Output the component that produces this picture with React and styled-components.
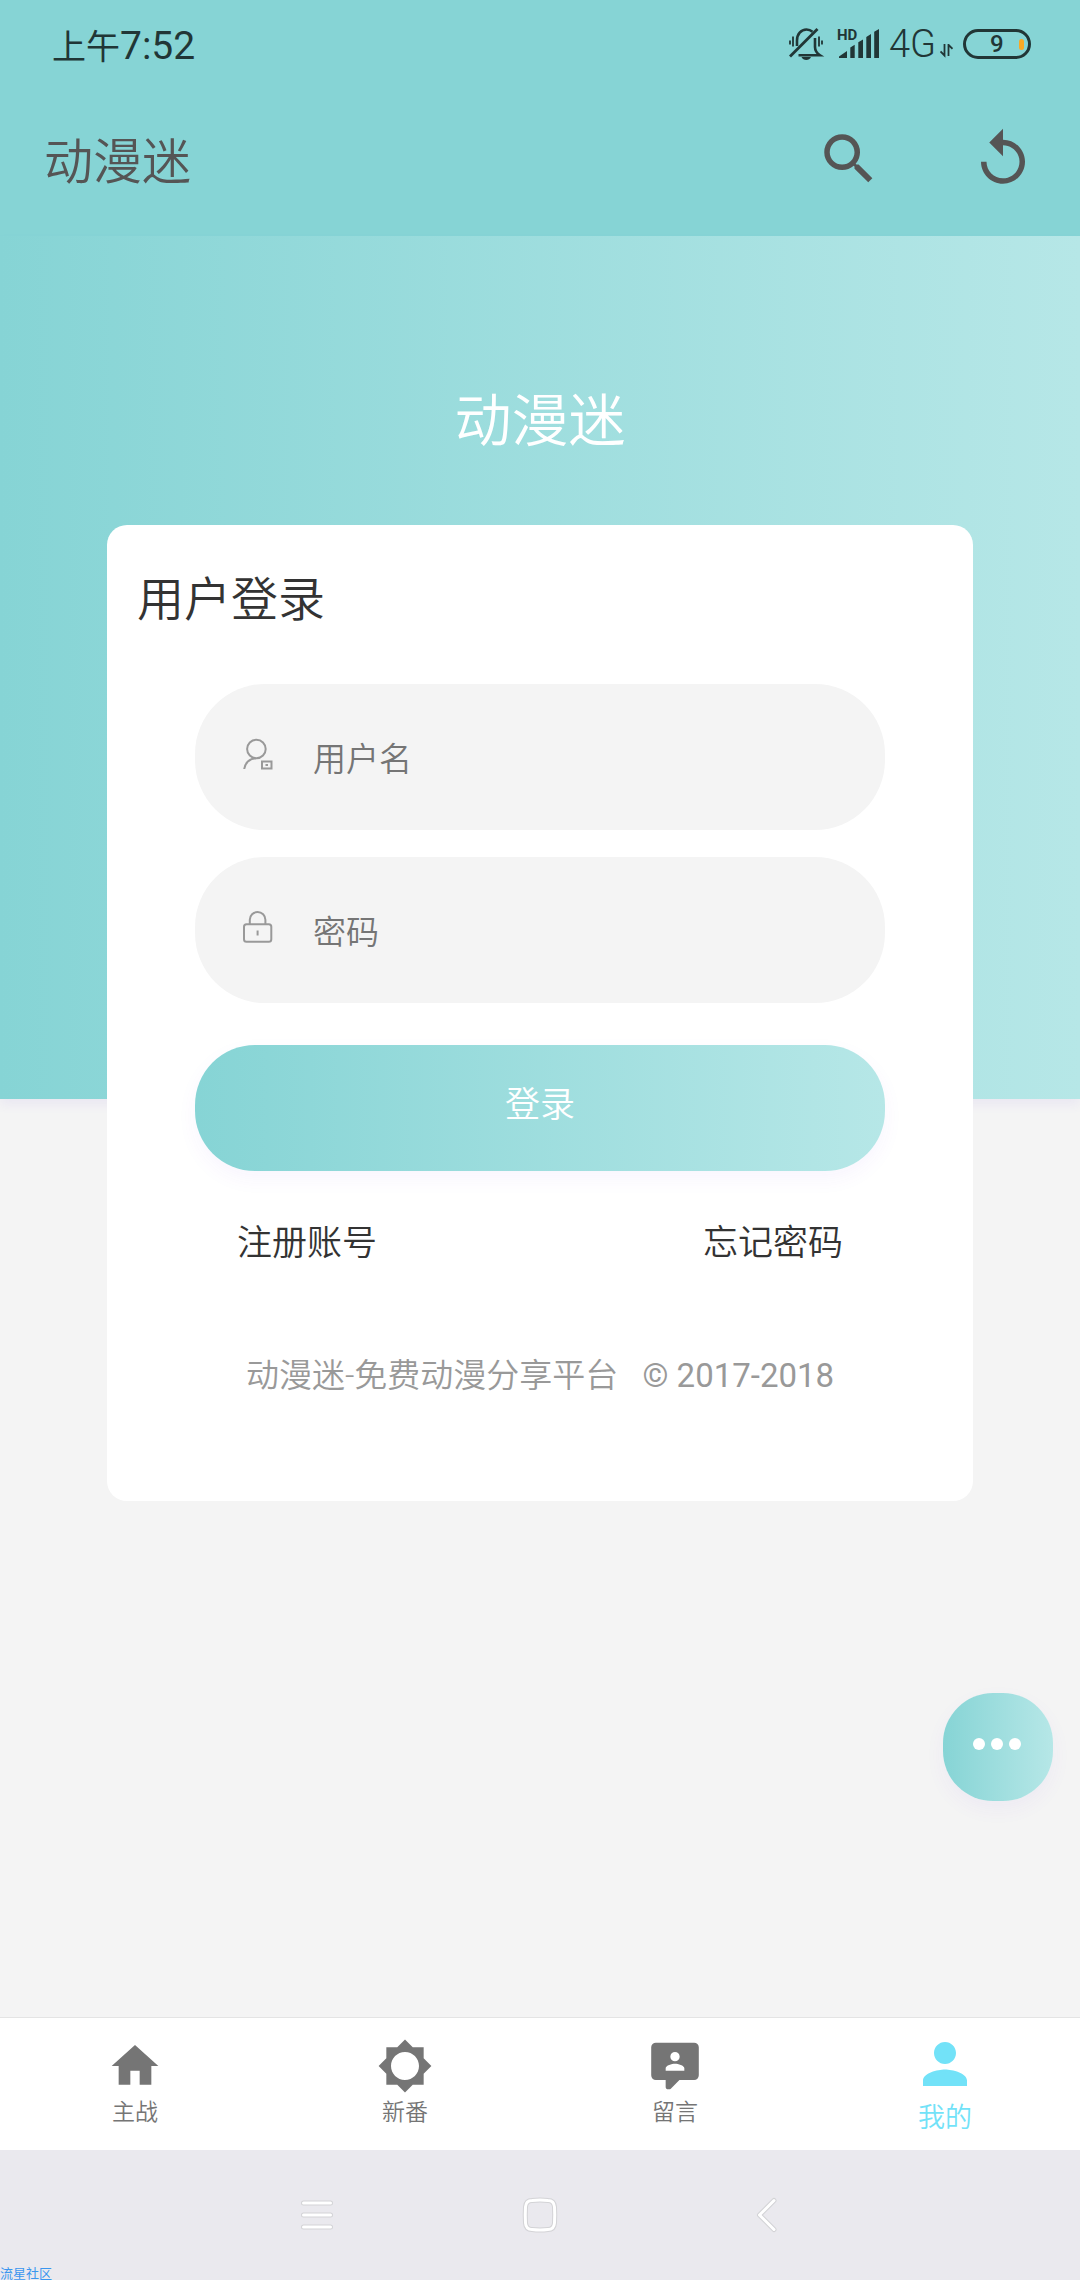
import React, {useState} from 'react';
import styled, {createGlobalStyle} from 'styled-components';
import {MdBrightnessLow, MdHome, MdPerson, MdReplay, MdSearch} from 'react-icons/md';


const GlobalStyle = createGlobalStyle`
    * {
        box-sizing: border-box;
    }

    body {
        margin: 0;
        background: #f4f4f4;
        font-family: Roboto, "Noto Sans CJK SC", sans-serif;
        font-weight: 350;
    }

    button, input {
        font: inherit;
        border: 0;
        padding: 0;
        background: none;
    }

    svg {
        display: block;
    }
`;

const Page = styled.div`
    display: flex;
    flex-direction: column;
    min-height: 100vh;
`;

const Header = styled.header`
    background: #86d4d5;
`;

const StatusBar = styled.div`
    display: flex;
    align-items: center;
    justify-content: space-between;
    height: 88px;
    padding: 0 49px 0 52px;
    color: #213636;
`;

const Clock = styled.time`
    font-size: 34px;
    font-weight: 400;
`;

const Digits = styled.span`
    font-size: 39px;
`;

const StatusIcons = styled.div`
    display: flex;
    align-items: center;
    gap: 10px;
`;

const Network = styled.div`
    display: flex;
    align-items: flex-end;
    gap: 4px;
    font-size: 38px;
    line-height: 32px;
`;

const Battery = styled.div`
    display: flex;
    align-items: center;
    justify-content: space-between;
    width: 68px;
    height: 30px;
    padding: 0 4px 0 24px;
    border: 3px solid #213636;
    border-radius: 15px;
    font-size: 24px;
    font-weight: 500;
    line-height: 24px;
`;

const Charge = styled.span`
    width: 5px;
    height: 11px;
    border-radius: 3px;
    background: #f9a825;
`;

const AppBar = styled.div`
    display: flex;
    align-items: center;
    justify-content: space-between;
    height: 148px;
    padding: 0 44px 6px;
    color: #555;
`;

const AppTitle = styled.h1`
    margin: 0;
    padding-bottom: 4px;
    font-size: 49px;
    font-weight: inherit;
`;

const Actions = styled.div`
    display: flex;
    gap: 88px;
`;

const IconButton = styled.button`
    color: inherit;
    cursor: pointer;
`;

const Main = styled.main`
    flex: 1;
    padding-bottom: 516px;
`;

const Hero = styled.section`
    display: flex;
    flex-direction: column;
    padding: 146px 107px 0;
    background: linear-gradient(to right, #86d4d5, #b6e7e7);
    box-shadow: 0 6px 10px rgba(110, 80, 230, 0.07);
`;

const Brand = styled.h2`
    margin: 0 0 63px;
    color: #fff;
    font-size: 57px;
    font-weight: inherit;
    line-height: 80px;
    text-align: center;
`;

/* the card hangs out below the coloured band */
const Card = styled.div`
    margin-bottom: -402px;
    padding: 43px 30px 105px;
    border-radius: 20px;
    background: #fff;
`;

const CardTitle = styled.h3`
    margin: 0 0 52px;
    color: #333;
    font-size: 47px;
    font-weight: inherit;
    line-height: 64px;
`;

const Form = styled.form`
    display: flex;
    flex-direction: column;
    gap: 27px;
    margin: 0 58px;
`;

const Field = styled.label`
    display: flex;
    align-items: center;
    gap: 40px;
    height: 146px;
    padding: 0 48px;
    border-radius: 70px;
    background: #f4f4f4;
    color: #999;

    svg {
        flex: none;
        margin-bottom: 7px;
    }
`;

const Input = styled.input`
    flex: 1;
    min-width: 0;
    height: 60px;
    padding-top: 4px;
    outline: 0;
    color: #333;
    font-size: 33px;

    &::placeholder {
        color: #757575;
        opacity: 1;
    }
`;

const Submit = styled.button`
    height: 126px;
    margin-top: 15px;
    padding-bottom: 14px;
    border-radius: 60px;
    background: linear-gradient(to right, #86d4d5, #b6e7e7);
    box-shadow: 0 8px 20px rgba(110, 60, 230, 0.05);
    color: #fff;
    font-size: 35px;
    cursor: pointer;
`;

const Links = styled.div`
    display: flex;
    justify-content: space-between;
    margin: 53px 100px 92px;
`;

const TextLink = styled.a`
    color: #333;
    font-size: 35px;
    line-height: 40px;
    text-decoration: none;
`;

const Copyright = styled.p`
    margin: 0;
    color: #999;
    font-size: 33px;
    line-height: 40px;
    text-align: center;
`;

const Latin = styled.span`
    font-weight: 400;
`;

const MoreButton = styled.button`
    position: fixed;
    right: 27px;
    bottom: 479px;
    display: flex;
    align-items: center;
    justify-content: center;
    gap: 6px;
    width: 110px;
    height: 108px;
    padding: 0 2px 6px 0;
    border-radius: 50px;
    background: linear-gradient(to right, #86d4d5, #b6e7e7);
    box-shadow: 0 8px 20px rgba(110, 60, 230, 0.05);
    cursor: pointer;
`;

const Dot = styled.span`
    width: 12px;
    height: 12px;
    border-radius: 50%;
    background: #fff;
`;

const TabBar = styled.nav`
    display: grid;
    grid-template-columns: repeat(4, 1fr);
    height: 133px;
    border-top: 1px solid #e4e4e4;
    background: #fff;
`;

const Tab = styled.a`
    display: flex;
    flex-direction: column;
    align-items: center;
    justify-content: center;
    gap: 2px;
    color: ${({$active}) => $active ? '#72e2f8' : '#757575'};
    font-size: ${({$active}) => $active ? '27px' : '23px'};
    line-height: ${({$active}) => $active ? '38px' : '34px'};
    text-decoration: none;
`;

const SystemBar = styled.footer`
    position: relative;
    display: flex;
    align-items: center;
    justify-content: center;
    gap: 175px;
    height: 130px;
    background: #eae9ee;
`;

const Watermark = styled.span`
    position: absolute;
    left: 0;
    bottom: 0;
    color: #3b96ee;
    font-size: 13px;
    font-weight: 400;
    line-height: 12px;
`;

function MutedBell() {
    return (
        <svg width="36" height="34" viewBox="0 0 36 34" fill="none" stroke="currentColor" strokeWidth="2.6">
            <path d="M8 19v-5.500C8 7 12 2.500 17.500 2.500c2.400 0 4.400.8 6 2.200" />
            <path d="M26 11v9c0 4 1.500 6 5 8.300H9.500" />
            <path d="M1 29.500 28.500 2" strokeWidth="2.8" />
            <path d="M12.500 30h9.500c-1.500 4-8 4-9.500 0z" fill="currentColor" stroke="none" />
            <path d="M1 13.500v4M4 9.500v10M30 9.500v10M33 13.500v4" strokeWidth="1.800" />
        </svg>
    );
}

function Signal() {
    return (
        <svg width="44" height="34" viewBox="-2 0 44 34" fill="currentColor">
            <text x="0" y="13" fontFamily="Roboto, sans-serif" fontSize="15" fontWeight="700">HD</text>
            <path d="M2 29.500 10 24v7H2zM13.300 20.500l4.400-2.800V31h-4.400zM21.300 15.300 26 12.500V31h-4.700zM29.300 10 34 7v24h-4.700zM37.200 4.800 42 2v29h-4.800z" />
        </svg>
    );
}

function DataArrows() {
    return (
        <svg width="13" height="16" viewBox="0 0 13 16" fill="none" stroke="currentColor" strokeWidth="1.800">
            <path d="M4.500 0v11.500L.5 7.500M8.500 12V.8l4 4" />
        </svg>
    );
}

function UserIcon() {
    return (
        <svg width="30" height="32" viewBox="0 0 30 32" fill="none" stroke="currentColor" strokeWidth="2">
            <circle cx="13.400" cy="11" r="9.300" />
            <path d="M1.200 31C1.800 25.500 6.500 20.300 13 20.300" />
            <rect x="19" y="23.500" width="9.500" height="7" />
            <path d="M22.500 27h2.500" />
        </svg>
    );
}

function LockIcon() {
    return (
        <svg width="30" height="32" viewBox="0 0 30 32" fill="none" stroke="currentColor" strokeWidth="2">
            <rect x="1" y="13.300" width="27.300" height="17.500" rx="2.500" />
            <path d="M6.800 13V8.800a7.800 7.800 0 0 1 15.600 0V13M14.600 19.500v5" />
        </svg>
    );
}

function MessageIcon({size}) {
    return (
        <svg width={size} height={size} viewBox="0 0 24 24" fill="currentColor" fillRule="evenodd">
            <path d="M20.200 2H3.800A2 2 0 0 0 1.800 4v12a2 2 0 0 0 2 2H8v3c0 .55.45 1 1 1h.5c.25 0 .5-.1.7-.3L13.900 18h6.300a2 2 0 0 0 2-2V4a2 2 0 0 0-2-2zM12 6a2 2 0 1 1 0 4 2 2 0 0 1 0-4zM16 14H8v-1c0-1.330 2.670-2 4-2s4 .67 4 2z" />
        </svg>
    );
}

/* white glyph with a thin grey edge */
function SystemIcon({d}) {
    return (
        <svg width="48" height="48" viewBox="0 0 48 48" fill="none" strokeLinecap="round" strokeLinejoin="round">
            <path d={d} stroke="#d3d3d6" strokeWidth="5" />
            <path d={d} stroke="#fff" strokeWidth="3" />
        </svg>
    );
}

const tabs = [
    {id: 'home', label: '主战', icon: MdHome},
    {id: 'new', label: '新番', icon: MdBrightnessLow},
    {id: 'message', label: '留言', icon: MessageIcon},
    {id: 'mine', label: '我的', icon: MdPerson},
];

const systemButtons = [
    {name: 'menu', d: 'M10.500 12h27M10.500 24h27M10.500 36h27'},
    {name: 'home', d: 'M16 9.500Q24 8.500 32 9.500Q38 9.500 38.500 16Q39 24 38.500 32Q38 38.500 32 38.500Q24 39.500 16 38.500Q10 38.500 9.500 32Q9 24 9.500 16Q10 9.500 16 9.500z'},
    {name: 'back', d: 'M35 9.500 20.500 24 35 38.500'},
];

function LoginForm() {
    const [user, setUser] = useState('');
    const [password, setPassword] = useState('');

    return (
        <Form id="login" onSubmit={(e) => e.preventDefault()}>
            <Field>
                <UserIcon />
                <Input
                    aria-label="用户名"
                    placeholder="用户名"
                    value={user}
                    onChange={(e) => setUser(e.target.value)}
                />
            </Field>
            <Field>
                <LockIcon />
                <Input
                    type="password"
                    aria-label="密码"
                    placeholder="密码"
                    value={password}
                    onChange={(e) => setPassword(e.target.value)}
                />
            </Field>
            <Submit type="submit">登录</Submit>
        </Form>
    );
}

function App() {
    const [active, setActive] = useState('mine');

    return (
        <Page lang="zh-CN">
            <GlobalStyle />
            <Header>
                <StatusBar>
                    <Clock>上午<Digits>7:52</Digits></Clock>
                    <StatusIcons>
                        <MutedBell />
                        <Signal />
                        <Network>4G<DataArrows /></Network>
                        <Battery>9<Charge /></Battery>
                    </StatusIcons>
                </StatusBar>
                <AppBar>
                    <AppTitle>动漫迷</AppTitle>
                    <Actions>
                        <IconButton type="button" aria-label="搜索"><MdSearch size={66} /></IconButton>
                        <IconButton type="button" aria-label="刷新"><MdReplay size={66} /></IconButton>
                    </Actions>
                </AppBar>
            </Header>

            <Main>
                <Hero>
                    <Brand>动漫迷</Brand>
                    <Card>
                        <CardTitle>用户登录</CardTitle>
                        <LoginForm />
                        <Links>
                            <TextLink href="#register">注册账号</TextLink>
                            <TextLink href="#forgot">忘记密码</TextLink>
                        </Links>
                        <Copyright>动漫迷-免费动漫分享平台{'\u00a0\u00a0 '}<Latin>© 2017-2018</Latin></Copyright>
                    </Card>
                </Hero>
            </Main>

            <MoreButton type="button" aria-label="更多">
                <Dot /><Dot /><Dot />
            </MoreButton>

            <TabBar>
                {tabs.map(({id, label, icon: Icon}) =>
                    <Tab key={id} href={'#' + id} $active={id === active} onClick={() => setActive(id)}>
                        <Icon size={id === active ? 66 : 56} />
                        {label}
                    </Tab>
                )}
            </TabBar>

            <SystemBar>
                {systemButtons.map((curr) =>
                    <IconButton key={curr.name} type="button" aria-label={curr.name}>
                        <SystemIcon d={curr.d} />
                    </IconButton>
                )}
                <Watermark>流星社区</Watermark>
            </SystemBar>
        </Page>
    );
}

export default App;
